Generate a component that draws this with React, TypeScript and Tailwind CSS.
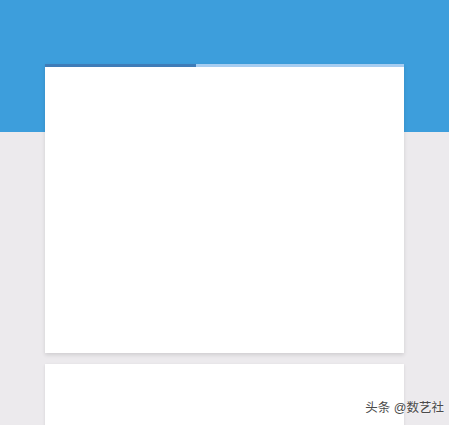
export default function App() {
    return (
        <div className="relative h-[425px] w-full overflow-hidden bg-[#eceaed] font-['Liberation_Sans','Noto_Sans_CJK_SC',sans-serif]">
            {/* app bar */}
            <div className="h-[132px] bg-[#3d9edc]" />

            <div className="-mt-[68px] flex flex-col gap-[11px] pl-[45px] pr-[45px]">
                {/* main card with tab indicator */}
                <div className="flex h-[289px] flex-col bg-white shadow-[0_2px_4px_rgba(0,0,0,0.12)]">
                    <div className="flex h-[3px]">
                        <div className="w-[151px] bg-[#3f7cb8]" />
                        <div className="flex-1 bg-[#a7cdf1]" />
                    </div>
                </div>

                {/* second card */}
                <div className="h-[80px] bg-white shadow-[0_1px_3px_rgba(0,0,0,0.1)]" />
            </div>

            <div className="absolute right-[5px] top-[399px] text-[12.5px] text-[#4a4a4a] [text-shadow:0_0_2px_#fff]">
                头条 @数艺社
            </div>
        </div>
    );
}
